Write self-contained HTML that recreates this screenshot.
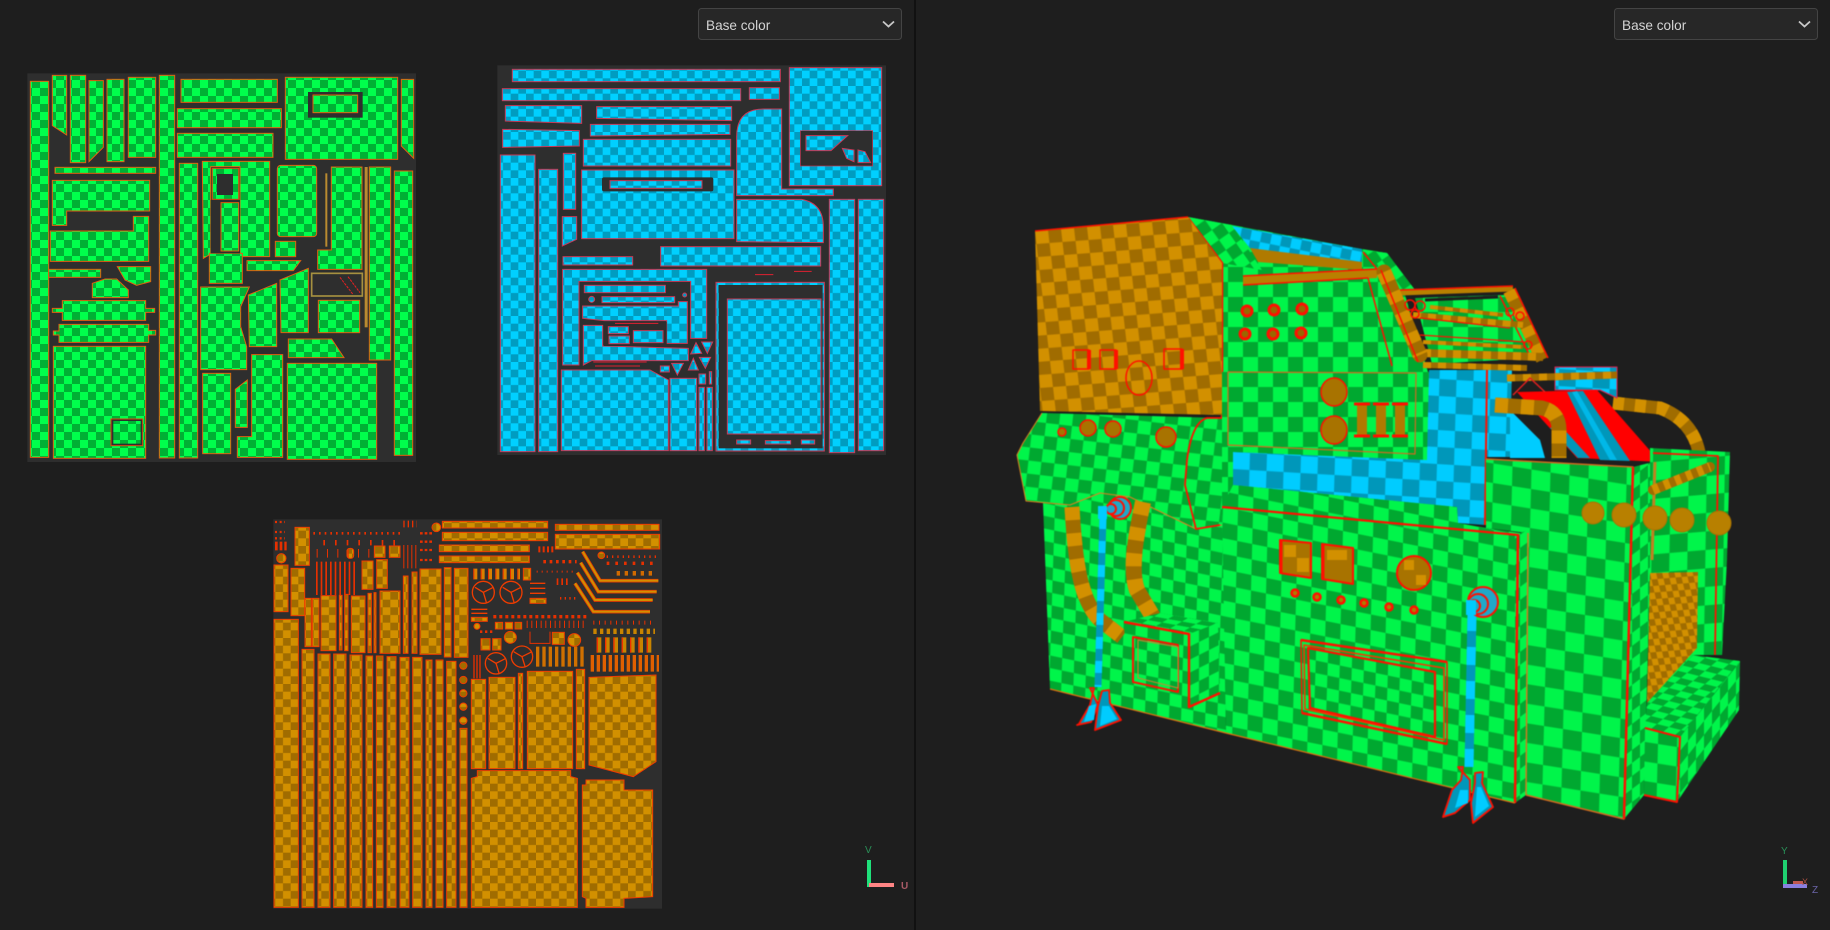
<!DOCTYPE html>
<html><head><meta charset="utf-8"><title>Base color</title>
<style>html,body{margin:0;padding:0;background:#1e1e1e;width:1830px;height:930px;overflow:hidden}svg{display:block}text{font-family:"Liberation Sans",sans-serif}.s{filter:blur(.4px)}</style>
</head><body>
<svg width="1830" height="930" viewBox="0 0 1830 930" xmlns="http://www.w3.org/2000/svg">
<defs>
<pattern id="g1" width="48" height="48" patternUnits="userSpaceOnUse"><rect width="48" height="48" fill="#00b034"/><rect width="24" height="24" fill="#00ff4c"/><rect x="24" y="24" width="24" height="24" fill="#00ff4c"/></pattern>
<pattern id="c1" width="46" height="46" patternUnits="userSpaceOnUse"><rect width="46" height="46" fill="#009cc0"/><rect width="23" height="23" fill="#00d0ff"/><rect x="23" y="23" width="23" height="23" fill="#00d0ff"/></pattern>
<pattern id="o1" width="46" height="46" patternUnits="userSpaceOnUse"><rect width="46" height="46" fill="#a06c00"/><rect width="23" height="23" fill="#d29000"/><rect x="23" y="23" width="23" height="23" fill="#d29000"/></pattern>
<pattern id="fa" width="2" height="2" patternUnits="userSpaceOnUse" patternTransform="matrix(12 2.500 -.4 12.500 1043 503)"><rect width="2" height="2" fill="#00a830"/><rect width="1" height="1" fill="#00f54a"/><rect x="1" y="1" width="1" height="1" fill="#00f54a"/></pattern>
<pattern id="fb" width="2" height="2" patternUnits="userSpaceOnUse" patternTransform="matrix(15 3 -.4 15.500 1223 507)"><rect width="2" height="2" fill="#00a830"/><rect width="1" height="1" fill="#00f54a"/><rect x="1" y="1" width="1" height="1" fill="#00f54a"/></pattern>
<pattern id="fc" width="2" height="2" patternUnits="userSpaceOnUse" patternTransform="matrix(19 3 -.5 19.500 1548 570)"><rect width="2" height="2" fill="#00a830"/><rect width="1" height="1" fill="#00f54a"/><rect x="1" y="1" width="1" height="1" fill="#00f54a"/></pattern>
<pattern id="fd" width="2" height="2" patternUnits="userSpaceOnUse" patternTransform="matrix(18 -1.500 -.3 18.500 1653 462)"><rect width="2" height="2" fill="#00a830"/><rect width="1" height="1" fill="#00f54a"/><rect x="1" y="1" width="1" height="1" fill="#00f54a"/></pattern>
<pattern id="fe" width="2" height="2" patternUnits="userSpaceOnUse" patternTransform="matrix(8 -6 0 13 1624 470)"><rect width="2" height="2" fill="#00a830"/><rect width="1" height="1" fill="#00f54a"/><rect x="1" y="1" width="1" height="1" fill="#00f54a"/></pattern>
<pattern id="ff" width="2" height="2" patternUnits="userSpaceOnUse" patternTransform="matrix(13 1.500 -1.500 13 1020 420)"><rect width="2" height="2" fill="#00a830"/><rect width="1" height="1" fill="#00f54a"/><rect x="1" y="1" width="1" height="1" fill="#00f54a"/></pattern>
<pattern id="fg" width="2" height="2" patternUnits="userSpaceOnUse" patternTransform="matrix(15 0 0 15 1228 372)"><rect width="2" height="2" fill="#00a830"/><rect width="1" height="1" fill="#00f54a"/><rect x="1" y="1" width="1" height="1" fill="#00f54a"/></pattern>
<pattern id="fh" width="2" height="2" patternUnits="userSpaceOnUse" patternTransform="matrix(12 3 -6 5 1693 655)"><rect width="2" height="2" fill="#00a830"/><rect width="1" height="1" fill="#00f54a"/><rect x="1" y="1" width="1" height="1" fill="#00f54a"/></pattern>
<pattern id="fi" width="2" height="2" patternUnits="userSpaceOnUse" patternTransform="matrix(8 -10 0 14 1680 737)"><rect width="2" height="2" fill="#00a830"/><rect width="1" height="1" fill="#00f54a"/><rect x="1" y="1" width="1" height="1" fill="#00f54a"/></pattern>
<pattern id="fj" width="2" height="2" patternUnits="userSpaceOnUse" patternTransform="matrix(10 -5 0 13 1189 634)"><rect width="2" height="2" fill="#00a830"/><rect width="1" height="1" fill="#00f54a"/><rect x="1" y="1" width="1" height="1" fill="#00f54a"/></pattern>
<pattern id="fk" width="2" height="2" patternUnits="userSpaceOnUse" patternTransform="matrix(14 2.500 -6 3.500 1160 613)"><rect width="2" height="2" fill="#00a830"/><rect width="1" height="1" fill="#00f54a"/><rect x="1" y="1" width="1" height="1" fill="#00f54a"/></pattern>
<pattern id="fl" width="2" height="2" patternUnits="userSpaceOnUse" patternTransform="matrix(10 -7 7 10 1188 217)"><rect width="2" height="2" fill="#00a830"/><rect width="1" height="1" fill="#00f54a"/><rect x="1" y="1" width="1" height="1" fill="#00f54a"/></pattern>
<pattern id="ca" width="2" height="2" patternUnits="userSpaceOnUse" patternTransform="matrix(17 1 -.5 17 1233 452)"><rect width="2" height="2" fill="#0097ba"/><rect width="1" height="1" fill="#00ccff"/><rect x="1" y="1" width="1" height="1" fill="#00ccff"/></pattern>
<pattern id="cb" width="2" height="2" patternUnits="userSpaceOnUse" patternTransform="matrix(10 2 -2 10 1232 226)"><rect width="2" height="2" fill="#0097ba"/><rect width="1" height="1" fill="#00ccff"/><rect x="1" y="1" width="1" height="1" fill="#00ccff"/></pattern>
<pattern id="oa" width="2" height="2" patternUnits="userSpaceOnUse" patternTransform="matrix(13 -1 1.500 13 1035 231)"><rect width="2" height="2" fill="#a06c00"/><rect width="1" height="1" fill="#d29000"/><rect x="1" y="1" width="1" height="1" fill="#d29000"/></pattern>
<pattern id="ob" width="2" height="2" patternUnits="userSpaceOnUse" patternTransform="matrix(6 -.5 1.500 6.500 1650 573)"><rect width="2" height="2" fill="#a06c00"/><rect width="1" height="1" fill="#d29000"/><rect x="1" y="1" width="1" height="1" fill="#d29000"/></pattern>
</defs>
<rect width="1830" height="930" fill="#1e1e1e"/>
<rect x="914" y="0" width="2" height="930" fill="#111"/>

<!-- UV green -->
<g transform="translate(0,40) scale(.33333)" class="s">
<rect x="82" y="100" width="1166" height="1166" fill="#2e2e2e"/>
<g fill="url(#g1)" stroke="#e06010" stroke-width="3">
<rect x="91" y="124" width="55" height="1128"/>
<polygon points="157,106 200,106 200,285 157,257"/>
<rect x="211" y="106" width="46" height="262"/>
<polygon points="267,122 310,122 310,322 267,365"/>
<rect x="321" y="118" width="51" height="247"/>
<rect x="385" y="112" width="82" height="240"/>
<rect x="478" y="106" width="46" height="1148"/>
<rect x="543" y="118" width="289" height="69"/>
<rect x="532" y="206" width="312" height="57"/>
<rect x="532" y="280" width="287" height="72"/>
<rect x="856" y="112" width="337" height="246"/>
<polygon points="1204,118 1241,118 1241,355 1204,318"/>
<rect x="165" y="382" width="302" height="18"/>
<polygon points="157,421 449,421 449,513 200,513 200,556 157,556"/>
<polygon points="151,573 400,573 400,529 446,529 446,664 151,664"/>
<rect x="146" y="688" width="156" height="24"/>
<polygon points="352,680 452,680 452,725 410,736 375,720"/>
<polygon points="277,773 277,730 315,717 350,717 385,750 385,773"/>
<polygon points="157,805 187,805 187,782 437,782 437,805 464,805 464,817 437,817 437,841 187,841 187,817 157,817"/>
<polygon points="160,873 177,873 177,853 446,853 446,871 467,871 467,885 446,885 446,907 177,907 177,885 160,885"/>
<rect x="160" y="919" width="277" height="336"/>
<rect x="538" y="370" width="55" height="884"/>
<polygon points="607,364 809,364 809,650 720,650 720,380 632,380 632,640 627,645 610,655"/>
<rect x="628" y="640" width="99" height="90"/>
<polygon points="602,741 748,741 722,800 722,860 740,920 740,989 602,989"/>
<polygon points="745,765 830,730 830,920 748,920"/>
<polygon points="840,720 925,685 925,878 843,878"/>
<polygon points="741,662 902,662 880,692 741,692"/>
<rect x="832" y="376" width="118" height="214" rx="10"/>
<rect x="826" y="604" width="61" height="46"/>
<polygon points="994,381 1086,381 1086,688 953,688 953,630 994,630"/>
<polygon points="1108,381 1172,381 1172,960 1108,960"/>
<rect x="1183" y="393" width="55" height="853"/>
<rect x="955" y="781" width="124" height="97"/>
<polygon points="865,897 995,897 1032,953 865,953"/>
<rect x="862" y="970" width="268" height="288"/>
<rect x="608" y="1000" width="84" height="241"/>
<polygon points="706,1048 742,1020 742,1162 706,1162"/>
<polygon points="755,944 848,944 848,1252 712,1252 712,1190 755,1190"/>
</g>
<rect x="924" y="156" width="164" height="77" fill="#2e2e2e"/>
<rect x="939" y="165" width="134" height="53" fill="url(#g1)" stroke="#e06010" stroke-width="3"/>
<rect x="333" y="1137" width="95" height="80" fill="#2e2e2e" stroke="#d84a10" stroke-width="3"/>
<rect x="340" y="1143" width="82" height="68" fill="url(#g1)"/>
<rect x="637" y="385" width="79" height="93" fill="url(#g1)" stroke="#d84a10" stroke-width="3"/>
<rect x="651" y="402" width="48" height="63" fill="#2e2e2e"/>
<rect x="632" y="480" width="88" height="160" fill="#2e2e2e"/>
<rect x="663" y="488" width="53" height="145" fill="url(#g1)" stroke="#e06010" stroke-width="3"/>
<rect x="976" y="400" width="6" height="220" fill="#b98a30"/>
<rect x="1094" y="381" width="9" height="481" fill="#b98a30"/>
<rect x="935" y="700" width="152" height="68" fill="#2e2e2e" stroke="#a59040" stroke-width="5"/>
<path d="M1020,712 1058,762M1044,710 1080,758" stroke="#e82020" stroke-width="3" stroke-dasharray="8 3" fill="none"/>
</g>

<!-- UV cyan -->
<g transform="translate(480,40) scale(.33333)" class="s">
<rect x="52" y="76" width="1166" height="1169" fill="#2e2e2e"/>
<g fill="url(#c1)" stroke="#c83a58" stroke-width="3">
<rect x="97" y="88" width="804" height="37"/>
<rect x="67" y="146" width="715" height="36"/>
<rect x="808" y="143" width="90" height="35"/>
<rect x="928" y="83" width="277" height="354"/>
<polygon points="76,197 305,197 305,250 76,243"/>
<polygon points="350,200 755,200 755,242 350,235"/>
<polygon points="331,253 750,253 750,283 331,288"/>
<polygon points="68,268 298,272 298,318 68,322"/>
<rect x="310" y="298" width="442" height="80"/>
<path d="M770,290Q770,207 850,207L905,207 905,447 1060,447 1060,467 770,467Z"/>
<rect x="305" y="390" width="457" height="206"/>
<rect x="61" y="345" width="104" height="890"/>
<rect x="176" y="388" width="57" height="847"/>
<rect x="250" y="340" width="37" height="168"/>
<polygon points="247,530 290,530 290,598 247,618"/>
<path d="M770,478L965,478Q1030,490 1030,560L1030,608 770,605Z"/>
<rect x="542" y="620" width="480" height="58"/>
<rect x="249" y="650" width="209" height="25"/>
<polygon points="248,688 680,688 680,895 632,895 632,724 297,724 297,975 248,975"/>
<polygon points="244,990 510,990 565,1020 565,1232 244,1232"/>
<rect x="570" y="1015" width="80" height="217"/>
<rect x="657" y="1042" width="16" height="190"/>
<rect x="681" y="1042" width="16" height="190"/>
<rect x="708" y="727" width="325" height="506"/>
<rect x="1048" y="478" width="76" height="760"/>
<rect x="1135" y="478" width="76" height="754"/>
</g>
<rect x="961" y="272" width="217" height="106" fill="#2e2e2e" stroke="#c83a58" stroke-width="2"/>
<rect x="366" y="412" width="334" height="42" rx="6" fill="#2e2e2e"/>
<rect x="716" y="735" width="312" height="490" fill="#2e2e2e"/>
<g fill="url(#c1)" stroke="#c83a58" stroke-width="3">
<polygon points="978,287 1103,287 1053,332 978,332"/>
<polygon points="1087,325 1122,330 1122,365 1100,355"/>
<polygon points="1134,330 1155,335 1172,368 1134,368"/>
<rect x="390" y="422" width="276" height="23"/>
<rect x="742" y="777" width="281" height="405"/>
<rect x="770" y="1200" width="42" height="12"/>
<rect x="856" y="1202" width="76" height="10"/>
<rect x="964" y="1200" width="40" height="12"/>
<rect x="313" y="736" width="243" height="22"/>
<rect x="366" y="770" width="218" height="18"/>
<circle cx="335" cy="778" r="9"/>
<circle cx="614" cy="765" r="6"/>
<polygon points="308,798 595,798 595,785 622,785 622,910 560,910 560,842 372,842 308,835"/>
<polygon points="310,856 368,856 368,918 625,925 625,962 335,962 310,975"/>
</g>
<rect x="372" y="845" width="188" height="73" fill="#2e2e2e"/>
<g fill="url(#c1)" stroke="#c83a58" stroke-width="3">
<rect x="385" y="860" width="60" height="21"/>
<rect x="387" y="888" width="61" height="23"/>
<rect x="460" y="872" width="89" height="36"/>
<polygon points="648,908 665,940 632,942"/>
<polygon points="665,906 698,906 682,940"/>
<polygon points="640,955 655,990 625,990"/>
<polygon points="658,952 692,952 676,985"/>
<polygon points="575,970 610,970 592,1005"/>
<rect x="541" y="978" width="27" height="18"/>
<rect x="657" y="1002" width="20" height="30"/>
<rect x="688" y="995" width="7" height="37"/>
</g>
<path d="M825,704H880M942,694H995M405,850H535M340,966H500M345,978H480" stroke="#e02030" stroke-width="3" fill="none"/>
</g>

<!-- UV orange -->
<g transform="translate(260,500) scale(.33333)" class="s">
<rect x="40" y="58" width="1166" height="1168" fill="#2e2e2e"/>
<g fill="url(#o1)" stroke="#ef3c00" stroke-width="3">
<rect x="105" y="82" width="43" height="114"/><rect x="42" y="195" width="42" height="140"/><rect x="93" y="205" width="41" height="142"/>
<rect x="42" y="358" width="73" height="864"/><rect x="126" y="448" width="36" height="774"/><rect x="174" y="462" width="36" height="760"/>
<rect x="221" y="462" width="37" height="760"/><rect x="270" y="465" width="36" height="757"/><rect x="318" y="468" width="20" height="754"/>
<rect x="349" y="468" width="20" height="754"/><rect x="381" y="470" width="27" height="752"/><rect x="420" y="472" width="27" height="750"/>
<rect x="458" y="472" width="28" height="750"/><rect x="498" y="480" width="18" height="742"/><rect x="528" y="480" width="21" height="742"/>
<rect x="560" y="484" width="28" height="738"/><rect x="600" y="685" width="21" height="537"/>
<rect x="135" y="295" width="19" height="145"/><rect x="157" y="295" width="20" height="145"/><rect x="183" y="287" width="45" height="165"/>
<rect x="238" y="286" width="8" height="164"/><rect x="254" y="283" width="10" height="169"/><rect x="274" y="288" width="41" height="170"/>
<rect x="324" y="280" width="10" height="178"/><rect x="342" y="278" width="6" height="180"/><rect x="360" y="273" width="60" height="187"/>
<rect x="430" y="228" width="14" height="232"/><rect x="456" y="216" width="15" height="244"/><rect x="480" y="207" width="63" height="256"/>
<rect x="553" y="203" width="20" height="268"/><rect x="583" y="205" width="41" height="267"/><rect x="306" y="183" width="33" height="85"/>
<rect x="350" y="179" width="32" height="86"/><rect x="343" y="138" width="32" height="34"/><rect x="388" y="138" width="32" height="34"/>
<rect x="261" y="145" width="20" height="30" rx="8"/>
<rect x="547" y="64" width="316" height="20"/><rect x="547" y="97" width="316" height="25"/><rect x="538" y="135" width="270" height="20"/>
<rect x="538" y="168" width="270" height="20"/><rect x="886" y="73" width="311" height="18"/><rect x="886" y="103" width="313" height="44"/>
<rect x="634" y="538" width="43" height="268"/><rect x="687" y="532" width="78" height="274"/><rect x="775" y="520" width="13" height="286"/>
<rect x="802" y="514" width="136" height="292"/><rect x="949" y="508" width="25" height="298"/>
<polygon points="987,532 1188,525 1188,785 1120,830 987,795"/>
<polygon points="634,835 652,830 652,812 932,812 932,830 952,835 952,1222 634,1222"/>
<polygon points="978,840 1092,840 1092,870 1178,870 1178,1190 1092,1195 1092,1222 978,1222 978,1195 967,1190 967,855 978,855"/>
<circle cx="64" cy="175" r="14"/><circle cx="529" cy="82" r="13"/>
<circle cx="610" cy="497" r="11"/><circle cx="610" cy="540" r="11"/><circle cx="610" cy="580" r="11"/><circle cx="610" cy="620" r="11"/><circle cx="610" cy="662" r="11"/>
<circle cx="751" cy="412" r="18"/><circle cx="943" cy="420" r="19"/><rect x="877" y="397" width="36" height="36"/>
<circle cx="651" cy="379" r="9"/><circle cx="1024" cy="166" r="10"/>
<rect x="663" y="416" width="27" height="34"/><rect x="698" y="416" width="25" height="34"/>
<rect x="706" y="367" width="22" height="20"/><rect x="736" y="367" width="22" height="20"/><rect x="765" y="367" width="20" height="20"/>
<rect x="810" y="295" width="48" height="15"/><rect x="634" y="352" width="48" height="12"/>
<rect x="790" y="205" width="22" height="35"/>
</g>
<g fill="none" stroke="#ef3c00" stroke-width="4">
<circle cx="670" cy="277" r="33"/><circle cx="753" cy="277" r="33"/><circle cx="708" cy="490" r="32"/><circle cx="786" cy="470" r="32"/>
<path d="M645,262 670,277 700,262M670,277 680,310M728,262 753,277 783,262M753,277 763,310M683,475 708,490 738,475M708,490 718,522M761,455 786,470 816,455M786,470 796,502"/>
<path d="M810,250H856M810,265H856M810,280H856M634,328H682M634,340H682"/>
</g>
<g fill="none" stroke-linejoin="miter">
<path d="M968,155 1020,242H1195M962,188 1015,275H1190M952,218 1005,300H1178M945,250 1000,335H1170" stroke="#e03a00" stroke-width="11"/>
<path d="M968,155 1020,242H1195M962,188 1015,275H1190M952,218 1005,300H1178M945,250 1000,335H1170" stroke="#d29000" stroke-width="6"/>
</g>
<g fill="none" stroke="#e63000">
<path d="M640,222H780" stroke="#d88000" stroke-width="32" stroke-dasharray="12 10"/>
<path d="M640,222H780" stroke-width="32" stroke-dasharray="3 19"/>
<path d="M168,235H285" stroke-width="100" stroke-dasharray="5 9"/>
<path d="M1010,435H1185" stroke-width="46" stroke-dasharray="14 11" stroke="#c88400"/>
<path d="M1010,435H1185" stroke-width="46" stroke-dasharray="4 21" stroke="#ef3000"/>
<path d="M992,490H1197" stroke-width="50" stroke-dasharray="10 8" stroke="#e06000"/>
<path d="M828,470H980" stroke-width="60" stroke-dasharray="10 9" stroke="#d07000"/>
<path d="M1000,394H1185" stroke-width="16" stroke-dasharray="10 10" stroke="#c88400"/>
<path d="M1000,368H1185" stroke-width="12" stroke-dasharray="3 14"/>
<path d="M700,350H980" stroke-width="10" stroke-dasharray="9 9"/>
<path d="M800,373H980" stroke-width="22" stroke-dasharray="3 11"/>
<path d="M160,100H430" stroke-width="8" stroke-dasharray="5 12"/>
<path d="M190,128H420" stroke-width="16" stroke-dasharray="5 30"/>
<path d="M170,160H330" stroke-width="26" stroke-dasharray="3 28"/>
<path d="M45,66H75M45,96H75M45,115H75" stroke-width="7" stroke-dasharray="6 8"/>
<path d="M45,138H80" stroke-width="26" stroke-dasharray="8 6"/>
<path d="M430,170H470" stroke-width="70" stroke-dasharray="3 9"/>
<path d="M480,100H520M480,125H520M480,150H520M480,180H520" stroke-width="7" stroke-dasharray="8 6"/>
<path d="M430,72H470" stroke-width="20" stroke-dasharray="4 9"/>
<path d="M835,148H880" stroke-width="18" stroke-dasharray="6 7"/>
<path d="M850,185H950" stroke-width="10" stroke-dasharray="8 11"/>
<path d="M830,215H950" stroke-width="6" stroke-dasharray="3 12"/>
<path d="M890,245H930" stroke-width="20" stroke-dasharray="5 9"/>
<path d="M900,295H950" stroke-width="8" stroke-dasharray="4 10"/>
<path d="M1040,170H1190" stroke-width="8" stroke-dasharray="4 12"/>
<path d="M1040,190H1190" stroke-width="10" stroke-dasharray="8 18"/>
<path d="M1070,220H1190" stroke-width="14" stroke-dasharray="10 14" stroke="#d06a00"/>
<path d="M660,395H700" stroke-width="8" stroke-dasharray="7 8"/>
<path d="M640,500H662" stroke-width="70" stroke-dasharray="4 5"/>
<path d="M810,395V430H870V395" stroke-width="3"/>
</g>
</g>

<!-- Dropdowns -->
<g>
<rect x="698.500" y="8.500" width="203" height="31" rx="3" fill="#272727" stroke="#444"/>
<text x="706" y="30" font-size="13.600" fill="#d4d4d4">Base color</text>
<path d="M883,21.500 888.500,26.500 894,21.500" fill="none" stroke="#c8c8c8" stroke-width="1.800"/>
<rect x="1614.500" y="8.500" width="203" height="31" rx="3" fill="#272727" stroke="#444"/>
<text x="1622" y="30" font-size="13.600" fill="#d4d4d4">Base color</text>
<path d="M1799,21.500 1804.500,26.500 1810,21.500" fill="none" stroke="#c8c8c8" stroke-width="1.800"/>
</g>

<!-- Axes -->
<g>
<rect x="867" y="860" width="4" height="27" fill="#1fe07a"/>
<rect x="869" y="883" width="25" height="4" fill="#ff8585"/>
<text x="865" y="853" font-size="10" fill="#2a9058">V</text>
<text x="901" y="889" font-size="10" font-weight="bold" fill="#a85a66">U</text>
<rect x="1783" y="860" width="4" height="26" fill="#1fd070"/>
<rect x="1783" y="884" width="24" height="4" fill="#8a7fe0"/>
<rect x="1793" y="881" width="10" height="3" fill="#c05850"/>
<text x="1781" y="854" font-size="10" fill="#2a9058">Y</text>
<text x="1802" y="885" font-size="9" fill="#a85040">X</text>
<text x="1812" y="893" font-size="10" fill="#6a64a8">Z</text>
</g>

<!-- 3D model -->
<g stroke-linejoin="round" class="s">
<!-- back -->
<path d="M1613,403L1660,408Q1692,420 1699,452" fill="none" stroke="#a06c00" stroke-width="13"/>
<path d="M1613,403L1660,408Q1692,420 1699,452" fill="none" stroke="#d29000" stroke-width="13" stroke-dasharray="11 11"/>
<polygon points="1555,367 1617,367 1617,398 1600,390 1555,390" fill="url(#ca)" stroke="#e02050" stroke-width="1"/>
<polygon points="1487,368 1512,368 1510,457 1487,457" fill="url(#ca)"/>
<polygon points="1510,410 1540,440 1545,458 1510,458" fill="#00ccff"/>
<polygon points="1517,392 1597,390 1660,462 1577,458" fill="#ff0000"/>
<polygon points="1567,392 1583,391 1630,461 1600,460" fill="#0097ba"/>
<polygon points="1572,392 1577,391 1617,460 1610,460" fill="#00b8e8"/>
<polygon points="1550,428 1560,425 1590,458 1578,458" fill="#0097ba"/>
<path d="M1507,378L1617,375" stroke="#a06c00" stroke-width="7" fill="none"/>
<path d="M1507,378L1617,375" stroke="#d29000" stroke-width="7" stroke-dasharray="8 8" fill="none"/>
<path d="M1513,395 1530,378 1545,392" stroke="#e02020" stroke-width="1.500" fill="none"/>
<path d="M1495,405L1542,408Q1559,412 1559,430L1559,458" fill="none" stroke="#a06c00" stroke-width="15"/>
<path d="M1495,405L1542,408Q1559,412 1559,430L1559,458" fill="none" stroke="#d29000" stroke-width="15" stroke-dasharray="13 13"/>

<!-- upper green -->
<polygon points="1188,217 1232,225 1362,249 1387,253 1415,290 1405,295 1428,372 1222,372 1222,263" fill="url(#fg)"/>
<polygon points="1188,217 1232,225 1262,270 1222,263" fill="url(#fl)"/>
<polygon points="1363,250 1387,253 1415,290 1400,293 1385,272" fill="url(#fl)"/>
<polygon points="1232,226 1362,249 1362,268 1258,258" fill="url(#cb)"/>
<polygon points="1250,248 1362,262 1362,270 1258,262" fill="#b07a00"/>
<polygon points="1243,276 1377,269 1377,278 1243,285" fill="#b98000"/>
<path d="M1243,276 1377,269M1243,285 1368,278" stroke="#ff1000" stroke-width="1.500" fill="none"/>
<path d="M1368,278 1392,366M1363,252 1377,269 1420,357" stroke="#ff1000" stroke-width="1.500" fill="none"/>
<path d="M1188,218 1222,263 1222,507" stroke="#ff1000" stroke-width="2.500" fill="none"/>
<!-- red dots -->
<g fill="#9a6700" stroke="#ff1000" stroke-width="3">
<circle cx="1247" cy="311" r="5"/><circle cx="1274" cy="310" r="5"/><circle cx="1302" cy="309" r="5"/>
<circle cx="1245" cy="334" r="5"/><circle cx="1273" cy="334" r="5"/><circle cx="1301" cy="333" r="5"/>
</g>

<!-- frame -->
<polygon points="1415,298 1505,295 1535,358 1432,364" fill="url(#fg)"/>
<path d="M1425,300 1498,297" stroke="#1e1e1e" stroke-width="3"/>
<path d="M1400,293 1513,289" stroke="#b98000" stroke-width="5" fill="none"/>
<path d="M1400,290 1513,286" stroke="#ff1000" stroke-width="1.500" fill="none"/>
<path d="M1509,291 1542,360" stroke="#a06c00" stroke-width="12" fill="none"/>
<path d="M1509,291 1542,360" stroke="#d29000" stroke-width="12" stroke-dasharray="10 10" fill="none"/>
<path d="M1515,288 1548,358M1500,296 1530,356" stroke="#ff1000" stroke-width="1.500" fill="none"/>
<g fill="none">
<path d="M1430,307 1503,315" stroke="#a06c00" stroke-width="4"/><path d="M1430,307 1503,315" stroke="#d29000" stroke-width="4" stroke-dasharray="8 7"/>
<path d="M1413,315 1523,325" stroke="#a06c00" stroke-width="6"/><path d="M1413,315 1523,325" stroke="#d29000" stroke-width="6" stroke-dasharray="8 7"/>
<path d="M1423,342 1523,347" stroke="#a06c00" stroke-width="4"/><path d="M1423,342 1523,347" stroke="#d29000" stroke-width="4" stroke-dasharray="8 7"/>
<path d="M1423,353 1543,357" stroke="#a06c00" stroke-width="8"/><path d="M1423,353 1543,357" stroke="#d29000" stroke-width="8" stroke-dasharray="8 7"/>
<path d="M1423,365 1527,368" stroke="#a06c00" stroke-width="6"/><path d="M1423,365 1527,368" stroke="#d29000" stroke-width="6" stroke-dasharray="8 7"/>
</g>
<path d="M1384,272 1420,355" stroke="#a06c00" stroke-width="15" fill="none" stroke-linecap="round"/>
<path d="M1384,272 1420,355" stroke="#d29000" stroke-width="15" stroke-dasharray="11 11" fill="none"/>
<path d="M1381,270 1418,362" stroke="#ff1000" stroke-width="1.500" fill="none"/>
<path d="M1420,318 1510,328M1420,335 1525,342" stroke="#ff1000" stroke-width="1.200" fill="none"/>
<g fill="none" stroke="#ff1000" stroke-width="1.500"><circle cx="1410" cy="305" r="5"/><circle cx="1420" cy="306" r="5"/><circle cx="1415" cy="314" r="4"/><circle cx="1510" cy="312" r="4"/><circle cx="1520" cy="316" r="4"/><circle cx="1528" cy="345" r="4"/></g>

<!-- mid backing -->
<polygon points="1222,372 1430,372 1430,460 1458,520 1222,510" fill="url(#fg)"/>
<!-- cyan middle -->
<polygon points="1233,452 1427,460 1429,370 1487,370 1485,525 1458,523 1457,507 1233,485" fill="url(#ca)"/>
<path d="M1487,370 1485,525" stroke="#ff1000" stroke-width="2"/>
<!-- inset green panel -->
<polygon points="1228,372 1416,373 1415,454 1228,445" fill="url(#fg)" stroke="#d06a20" stroke-width="1.200"/>
<g fill="#a87300" stroke="#ff1000" stroke-width="1.500">
<ellipse cx="1334" cy="392" rx="13" ry="14"/><ellipse cx="1334" cy="430" rx="13" ry="14"/>
</g>
<g fill="#b07a00"><rect x="1357" y="404" width="10" height="32"/><rect x="1376" y="404" width="10" height="32"/><rect x="1395" y="404" width="10" height="32"/></g>
<path d="M1354,404H1370M1354,436H1370M1373,404H1389M1373,436H1389M1392,404H1408M1392,436H1408" stroke="#ff1000" stroke-width="3"/>

<!-- orange box -->
<polygon points="1035,231 1188,217 1222,263 1222,415 1040,411" fill="url(#oa)"/>
<path d="M1035,231 1188,217" stroke="#ff1000" stroke-width="1.500"/>
<g fill="none" stroke="#ff1000" stroke-width="1.500">
<rect x="1073" y="350" width="16" height="19"/><rect x="1100" y="350" width="16" height="19"/><rect x="1164" y="349" width="18" height="20"/>
<ellipse cx="1139" cy="378" rx="13" ry="17"/>
</g>
<path d="M1089,350V369M1116,350V369M1182,349V369" stroke="#ff1000" stroke-width="4"/>

<!-- lower body -->
<polygon points="1043,503 1050,689 1226,733 1223,507 1196,529 1130,497 1100,493 1070,505" fill="url(#fa)"/>
<polygon points="1222,507 1233,485 1457,507 1458,523 1486,528 1520,533 1515,803 1226,733" fill="url(#fb)"/>
<!-- drum -->
<polygon points="1042,413 1222,418 1222,525 1196,529 1130,497 1100,493 1070,505 1026,501 1017,455 1023,443" fill="url(#ff)"/>
<path d="M1042,413 1023,443 1017,455 1026,501 1070,505 1100,493 1130,497 1196,529 1222,525" fill="none" stroke="#e08020" stroke-width="1"/>
<path d="M1222,418H1207Q1192,422 1187,460L1185,485 1196,529 1220,525" fill="none" stroke="#ff1000" stroke-width="1.800"/>
<g fill="#a87300" stroke="#ff1000" stroke-width="1.500">
<ellipse cx="1088" cy="428" rx="8" ry="8"/><ellipse cx="1113" cy="429" rx="8" ry="8"/><circle cx="1062" cy="432" r="4"/><circle cx="1166" cy="437" r="10"/>
</g>
<!-- panel 2 -->
<polygon points="1486,459 1633,467 1624,819 1526,795 1528,533 1486,528" fill="url(#fc)"/>
<polygon points="1515,535 1528,530 1526,795 1515,803" fill="url(#fe)"/>
<polygon points="1633,467 1653,462 1644,795 1624,819" fill="url(#fe)"/>
<!-- right side -->
<polygon points="1650,448 1730,452 1727,560 1722,655 1693,655 1647,703 1650,573" fill="url(#fd)"/>
<polygon points="1650,573 1698,572 1697,648 1647,703" fill="url(#ob)"/>
<path d="M1653,453 1718,456 1715,655" stroke="#ff1000" stroke-width="1.800" fill="none"/>
<!-- step -->
<polygon points="1647,703 1693,655 1740,661 1680,737 1645,728" fill="url(#fh)"/>
<polygon points="1680,737 1740,661 1739,710 1677,802" fill="url(#fi)"/>
<polygon points="1645,728 1680,737 1677,802 1644,795" fill="url(#fc)"/>
<path d="M1645,728 1680,737 1677,802 1644,795" fill="none" stroke="#ff1000" stroke-width="2"/>

<!-- edges -->
<path d="M1222,507 1518,535" stroke="#ff1000" stroke-width="2.200" fill="none"/>
<path d="M1518,534 1515,803" stroke="#ff1000" stroke-width="2.500" fill="none"/>
<path d="M1528,533 1526,795" stroke="#d07a20" stroke-width="1.500" fill="none"/>
<path d="M1486,459 1633,467 1624,819 1526,795" stroke="#d06a20" stroke-width="1.500" fill="none"/>
<path d="M1633,467 1624,819" stroke="#ff1000" stroke-width="2.500" fill="none"/>
<path d="M1655,462 1652,560" stroke="#c08020" stroke-width="3" fill="none"/>
<path d="M1050,689 1226,733 1515,803" stroke="#e07010" stroke-width="1.200" fill="none"/>
<path d="M1653,490 1710,467" stroke="#a06c00" stroke-width="10" fill="none" stroke-linecap="round"/>
<path d="M1653,490 1710,467" stroke="#d29000" stroke-width="10" stroke-dasharray="6 6" fill="none"/>
<g fill="#b88000" stroke="#a87300" stroke-width="1">
<circle cx="1593" cy="513" r="11"/><circle cx="1624" cy="515" r="12"/><circle cx="1655" cy="518" r="12"/><circle cx="1682" cy="520" r="12"/><circle cx="1719" cy="523" r="12"/>
</g>

<!-- hoses -->
<path d="M1072,507C1075,560 1080,600 1100,620L1122,637" fill="none" stroke="#a06c00" stroke-width="15"/>
<path d="M1072,507C1075,560 1080,600 1100,620L1122,637" fill="none" stroke="#d29000" stroke-width="15" stroke-dasharray="13 13"/>
<path d="M1143,502C1135,540 1130,570 1137,590L1153,617" fill="none" stroke="#a06c00" stroke-width="16"/>
<path d="M1143,502C1135,540 1130,570 1137,590L1153,617" fill="none" stroke="#d29000" stroke-width="16" stroke-dasharray="13 13"/>

<!-- window box -->
<polygon points="1124,622 1160,613 1218,623 1189,634" fill="url(#fk)"/>
<polygon points="1124,622 1189,634 1189,707 1127,693" fill="url(#fa)"/>
<polygon points="1189,634 1218,623 1220,693 1189,707" fill="url(#fj)"/>
<path d="M1124,622 1189,634 1189,707 1220,693" fill="none" stroke="#ff1000" stroke-width="2.500"/>
<polygon points="1133,637 1178,645 1178,692 1133,682" fill="url(#fa)" stroke="#ff1000" stroke-width="2"/>
<polygon points="1138,640 1178,647 1178,688 1138,678" fill="url(#fa)" stroke="#d08030" stroke-width="1"/>

<!-- front controls -->
<g fill="#a87300" stroke="#ff1000" stroke-width="2">
<polygon points="1280,540 1311,543 1311,578 1280,573"/><polygon points="1322,544 1353,548 1353,584 1322,579"/>
<circle cx="1414" cy="573" r="17"/>
</g>
<path d="M1281,540V573M1323,544V579" stroke="#ff1000" stroke-width="3"/>
<g fill="#d29000"><rect x="1284" y="545" width="12" height="12"/><rect x="1297" y="558" width="12" height="14"/><rect x="1327" y="550" width="20" height="10"/><rect x="1404" y="560" width="10" height="10"/><rect x="1416" y="575" width="10" height="10"/></g>
<g fill="#b07a00" stroke="#ff1000" stroke-width="2.500">
<circle cx="1295" cy="593" r="3.500"/><circle cx="1317" cy="597" r="3.500"/><circle cx="1341" cy="600" r="3.500"/><circle cx="1364" cy="603" r="3.500"/><circle cx="1389" cy="607" r="3.500"/><circle cx="1414" cy="610" r="3.500"/>
</g>
<!-- big window -->
<polygon points="1301,640 1447,662 1447,744 1302,713" fill="url(#fb)" stroke="#ff1000" stroke-width="1.500"/>
<polygon points="1304,645 1444,668 1444,740 1305,709" fill="none" stroke="#ff3000" stroke-width="1.500"/>
<polygon points="1308,648 1435,672 1435,737 1310,708" fill="url(#fa)" stroke="#ff1000" stroke-width="2.200"/>
<path d="M1301,640 1447,662M1302,713 1447,744" stroke="#ff1000" stroke-width="2.500"/>

<!-- rods -->
<path d="M1103,517 1098,687" stroke="#0097ba" stroke-width="7"/>
<path d="M1103,517 1098,687" stroke="#00ccff" stroke-width="7" stroke-dasharray="12 12"/>
<path d="M1472,613 1469,767" stroke="#0097ba" stroke-width="9"/>
<path d="M1472,613 1469,767" stroke="#00ccff" stroke-width="9" stroke-dasharray="18 16"/>
<!-- knobs -->
<g fill="#20a8c8" stroke="#ff1000" stroke-width="2">
<circle cx="1120" cy="508" r="11"/><circle cx="1116" cy="508" r="8"/><circle cx="1111" cy="509" r="5"/>
<circle cx="1483" cy="602" r="15"/><circle cx="1478" cy="604" r="10"/><circle cx="1474" cy="606" r="6"/>
</g>
<rect x="1098" y="506" width="9" height="13" fill="#00ccff"/>
<rect x="1466" y="600" width="10" height="15" fill="#00ccff"/>
<!-- feet -->
<g fill="#0097ba" stroke="#ff1000" stroke-width="1.800">
<polygon points="1090,688 1094,688 1090,705 1079,724 1077,725 1091,722 1098,705"/>
<polygon points="1102,691 1109,690 1110,703 1121,720 1095,730 1098,706"/>
<polygon points="1458,767 1463,767 1461,780 1452,790 1443,817 1455,813 1470,800 1470,780"/>
<polygon points="1475,773 1483,772 1482,783 1493,807 1473,823 1471,803 1475,783"/>
</g>
<g fill="#00ccff">
<polygon points="1089,706 1096,704 1094,720 1084,722"/><polygon points="1100,726 1102,706 1109,706 1117,719"/>
<polygon points="1455,808 1460,790 1468,790 1468,803"/><polygon points="1475,817 1477,787 1481,787 1489,806"/>
</g>
</g>
</svg>
</body></html>
